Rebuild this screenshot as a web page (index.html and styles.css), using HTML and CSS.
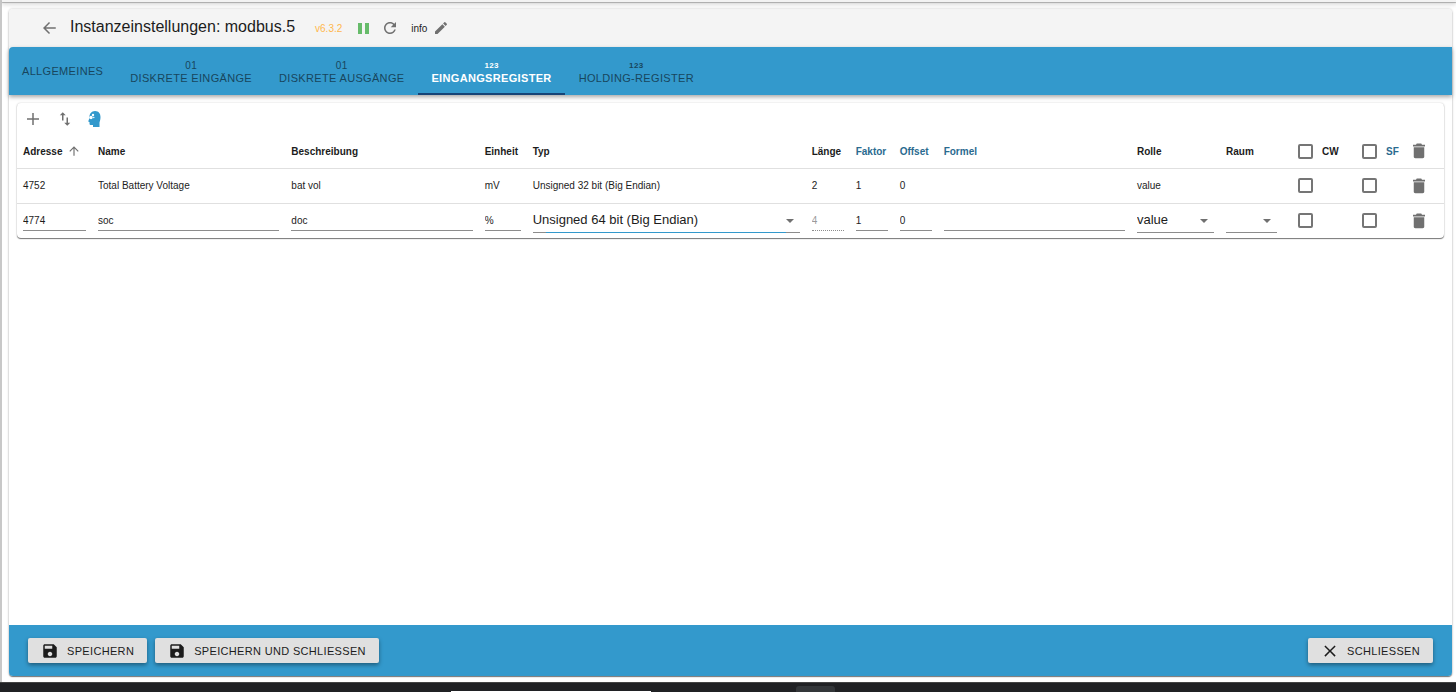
FILE: index.html
```html
<!DOCTYPE html>
<html lang="de">
<head>
<meta charset="utf-8">
<title>Instanzeinstellungen: modbus.5</title>
<link rel="stylesheet" href="styles.css">
</head>
<body>
<svg class="sprite" aria-hidden="true">
  <symbol id="trash" viewBox="0 0 24 24"><path d="M5 7h14v12.500c0 1-.8 2-2 2H7c-1.200 0-2-1-2-2zM20 3.500h-4l-1-1.500H9L8 3.500H4V6h16z"/></symbol>
  <symbol id="save" viewBox="0 0 24 24"><path d="M17 3H5c-1.110 0-2 .9-2 2v14c0 1.100.89 2 2 2h14c1.100 0 2-.9 2-2V7l-4-4zm-5 16c-1.660 0-3-1.340-3-3s1.340-3 3-3 3 1.340 3 3-1.340 3-3 3zm3-10H5V5h10v4z"/></symbol>
  <symbol id="arrow" viewBox="0 0 8 4"><path d="M0 0h8L4 4z"/></symbol>
</svg>
<div class="app">
  <div class="topbar"></div>
  <main class="card">
    <header class="head">
      <button class="icon-btn back" aria-label="Zurück"><svg viewBox="0 0 24 24"><path d="M21 11H7.830l5.590-5.590L12 4l-8 8 8 8 1.410-1.410L7.830 13H21v-2z"/></svg></button>
      <h1>Instanzeinstellungen: modbus.5</h1>
      <span class="version">v6.3.2</span>
      <button class="icon-btn pause" aria-label="Pause"><svg viewBox="0 0 16 16"><path d="M3 3h4v11H3zM10 3h4v11h-4z"/></svg></button>
      <button class="icon-btn reload" aria-label="Neu laden"><svg viewBox="0 0 24 24"><path d="M17.650 6.350C16.200 4.900 14.210 4 12 4c-4.420 0-7.990 3.580-7.990 8s3.570 8 7.990 8c3.730 0 6.840-2.550 7.730-6h-2.080c-.82 2.330-3.040 4-5.650 4-3.310 0-6-2.690-6-6s2.690-6 6-6c1.660 0 3.140.69 4.220 1.780L13 11h7V4l-2.350 2.350z"/></svg></button>
      <span class="level">info</span>
      <button class="icon-btn edit" aria-label="Bearbeiten"><svg viewBox="0 0 24 24"><path d="M3 17.250V21h3.750L17.810 9.940l-3.750-3.750L3 17.250zM20.710 7.040c.39-.39.39-1.020 0-1.410l-2.340-2.340a1 1 0 0 0-1.410 0l-1.830 1.830 3.750 3.750 1.830-1.830z"/></svg></button>
    </header>

    <nav class="tabs" role="tablist">
      <button class="tab" role="tab">ALLGEMEINES</button>
      <button class="tab" role="tab"><span class="tab-icon">01</span>DISKRETE EINGÄNGE</button>
      <button class="tab" role="tab"><span class="tab-icon">01</span>DISKRETE AUSGÄNGE</button>
      <button class="tab active" role="tab" aria-selected="true"><span class="tab-icon num">123</span>EINGANGSREGISTER</button>
      <button class="tab" role="tab"><span class="tab-icon num">123</span>HOLDING-REGISTER</button>
    </nav>

    <section class="content">
      <div class="paper">
        <div class="tools">
          <button class="icon-btn" aria-label="Hinzufügen"><svg viewBox="0 0 24 24"><path d="M20 13h-7v7h-2v-7H4v-2h7V4h2v7h7v2z"/></svg></button>
          <button class="icon-btn" aria-label="Importieren/Exportieren"><svg viewBox="0 0 24 24"><path d="M16 17.010V10h-2v7.010h-3L15 21l4-3.990h-3zM9 3L5 6.990h3V14h2V6.990h3L9 3z"/></svg></button>
          <button class="icon-btn head-icon" aria-label="Expertenmodus"><svg viewBox="0 0 18 18"><path d="M7 17v-2H5c-1 0-1.500-.5-1.500-1.500V12H2.500v-1.500L3.500 8C3 4 5.500 1 9 1c4 0 5.500 3 5.500 6 0 2-.5 4-1 5.500V17z"/><g fill="#fff"><circle cx="7" cy="5" r="1.200"/><circle cx="5" cy="7.500" r="1.700"/><circle cx="7.800" cy="7.500" r=".7"/></g></svg></button>
        </div>
        <table class="grid">
          <colgroup>
            <col class="c-addr"><col><col><col class="c-unit"><col class="c-type"><col class="c-num"><col class="c-num"><col class="c-num"><col><col class="c-role"><col class="c-room"><col class="c-cw"><col class="c-sf"><col class="c-del">
          </colgroup>
          <thead>
            <tr>
              <th><span class="sort">Adresse <svg viewBox="0 0 24 24"><path d="M4 12l1.410 1.410L11 7.830V20h2V7.830l5.580 5.590L20 12l-8-8-8 8z"/></svg></span></th>
              <th>Name</th><th>Beschreibung</th><th>Einheit</th><th>Typ</th><th>Länge</th>
              <th class="link">Faktor</th><th class="link">Offset</th><th class="link">Formel</th>
              <th>Rolle</th><th>Raum</th>
              <th><label class="check-label"><input type="checkbox">CW</label></th>
              <th class="link"><label class="check-label"><input type="checkbox">SF</label></th>
              <th><button class="icon-btn del" aria-label="Alle löschen"><svg><use href="#trash"/></svg></button></th>
            </tr>
          </thead>
          <tbody>
            <tr>
              <td>4752</td><td>Total Battery Voltage</td><td>bat vol</td><td>mV</td><td>Unsigned 32 bit (Big Endian)</td><td>2</td><td>1</td><td>0</td><td></td><td>value</td><td></td>
              <td><input type="checkbox" aria-label="CW"></td>
              <td><input type="checkbox" aria-label="SF"></td>
              <td><button class="icon-btn del" aria-label="Löschen"><svg><use href="#trash"/></svg></button></td>
            </tr>
            <tr>
              <td><input class="field" aria-label="Adresse" value="4774"></td>
              <td><input class="field" aria-label="Name" value="soc"></td>
              <td><input class="field" aria-label="Beschreibung" value="doc"></td>
              <td><input class="field" aria-label="Einheit" value="%"></td>
              <td><span class="select focus"><select class="field" aria-label="Typ"><option>Unsigned 64 bit (Big Endian)</option></select><svg><use href="#arrow"/></svg></span></td>
              <td><input class="field" aria-label="Länge" value="4" disabled></td>
              <td><input class="field" aria-label="Faktor" value="1"></td>
              <td><input class="field" aria-label="Offset" value="0"></td>
              <td><input class="field" aria-label="Formel" value=""></td>
              <td><span class="select"><select class="field" aria-label="Rolle"><option>value</option></select><svg><use href="#arrow"/></svg></span></td>
              <td><span class="select"><select class="field" aria-label="Raum"><option></option></select><svg><use href="#arrow"/></svg></span></td>
              <td><input type="checkbox" aria-label="CW"></td>
              <td><input type="checkbox" aria-label="SF"></td>
              <td><button class="icon-btn del" aria-label="Löschen"><svg><use href="#trash"/></svg></button></td>
            </tr>
          </tbody>
        </table>
      </div>
    </section>

    <footer class="foot">
      <button class="btn"><svg><use href="#save"/></svg>SPEICHERN</button>
      <button class="btn"><svg><use href="#save"/></svg>SPEICHERN UND SCHLIESSEN</button>
      <button class="btn close"><svg viewBox="0 0 24 24"><path d="M19.500 5.900L18.100 4.500 12 10.600 5.900 4.500 4.500 5.900 10.600 12 4.500 18.100 5.900 19.500 12 13.400 18.100 19.500 19.500 18.100 13.400 12z"/></svg>SCHLIESSEN</button>
    </footer>
  </main>
</div>
<div class="taskbar"><span class="window-edge"></span><span class="task"></span></div>
</body>
</html>
```
FILE: styles.css
```css
* { box-sizing: border-box; }

body {
  margin: 0;
  height: 100vh;
  display: flex;
  flex-direction: column;
  overflow: hidden;
  background: #fff;
  color: #1c1c1c;
  font-family: "Liberation Sans", Arial, sans-serif;
  font-size: 10px;
}

button, input, select { font: inherit; color: inherit; margin: 0; }
svg { fill: currentColor; flex: none; }
.sprite { position: absolute; width: 0; height: 0; }

.app {
  flex: 1;
  min-height: 0;
  display: flex;
  flex-direction: column;
  border-left: 2px solid #c8c8c8;
}
.topbar {
  height: 2px;
  margin-bottom: 7px;
  background: #f3f3f3;
  box-shadow: 0 1px 1px #aaa, 0 2px 4px #bbb;
}
.card {
  flex: 1;
  min-height: 0;
  display: flex;
  flex-direction: column;
  margin: 0 4px 6px 7px;
  border-radius: 4px;
  box-shadow: 0 1px 1px #777, 0 0 2px 1px #e4e4e4;
}

.head {
  display: flex;
  align-items: center;
  height: 38px;
  padding-left: 31px;
  background: #f4f4f4;
  border-radius: 4px 4px 0 0;
}
.head h1 { margin: 0 20px 2px 12px; font-size: 16px; font-weight: 400; }
.icon-btn {
  display: flex;
  padding: 0;
  border: 0;
  background: none;
  color: #707070;
}
.icon-btn svg { width: 18px; height: 18px; }
.version { color: #ffb74d; margin-right: 13px; }
.icon-btn.pause { color: #66bb6a; margin-right: 10px; }
.icon-btn.pause svg { width: 16px; height: 16px; }
.reload { margin-right: 12px; }
.level { margin-right: 6px; }
.icon-btn.edit svg { width: 16px; height: 16px; }

.tabs {
  display: flex;
  gap: 1px;
  height: 48px;
  background: #3399cc;
  border-radius: 4px 0 0;
  box-shadow: 0 2px 4px rgba(0, 0, 0, .35);
  position: relative;
}
.tab {
  display: flex;
  flex-direction: column;
  align-items: center;
  justify-content: center;
  padding: 3px 13px 0;
  border: 0;
  border-bottom: 2px solid transparent;
  background: none;
  color: #18465d;
  font-size: 11px;
  line-height: 13px;
  letter-spacing: .03em;
}
.tab-icon { font-size: 10px; line-height: 13px; }
.tab-icon.num { font-size: 8px; font-weight: 700; }
.tab.active { color: #fff; font-weight: 700; border-color: #164477; }

.content { flex: 1; padding: 8px 8px 0; background: #fff; }
.paper {
  border-radius: 4px;
  box-shadow: 0 1px 1px #777, 0 0 2px #ccc;
}
.tools {
  display: flex;
  align-items: center;
  gap: 14px;
  height: 32px;
  padding-left: 7px;
}
.icon-btn.head-icon { color: #3399cc; margin-left: -2px; }

.grid { width: 100%; table-layout: fixed; border-collapse: collapse; }
.c-addr { width: 75px; }
.c-unit { width: 48px; }
.c-type { width: 279px; }
.c-num { width: 44px; }
.c-role { width: 89px; }
.c-room { width: 63px; }
.c-cw { width: 64px; }
.c-sf { width: 57px; }
.c-del { width: 40px; }
.grid th, .grid td {
  height: 35px;
  padding: 0 6px;
  text-align: left;
  white-space: nowrap;
  border-bottom: 1px solid #e0e0e0;
}
.grid th { font-weight: 700; height: 33px; }
.grid th.link { color: #2a6a8f; }
.grid tr:last-child td { border-bottom: 0; }
.sort { display: flex; align-items: center; gap: 5px; }
.sort svg { width: 14px; height: 14px; color: #707070; }
.check-label { display: flex; align-items: center; gap: 9px; }

input[type="checkbox"] {
  appearance: none;
  display: block;
  flex: none;
  width: 15px;
  height: 15px;
  margin-left: 9px;
  border: 2px solid #757575;
  border-radius: 2px;
}
.field {
  display: block;
  width: 100%;
  height: 21px;
  padding: 0;
  border: 0;
  border-bottom: 1px solid #8c8c8c;
  border-radius: 0;
  background: transparent;
  outline: 0;
}
.field:disabled { color: #9a9a9a; border-bottom-style: dotted; }
.select { display: block; position: relative; }
.select svg {
  position: absolute;
  right: 6px;
  top: 11px;
  width: 8px;
  height: 4px;
  color: #707070;
  pointer-events: none;
}
select.field {
  appearance: none;
  height: 25px;
  padding-bottom: 2px;
  font-size: 13px;
}
.select.focus::after {
  content: "";
  position: absolute;
  left: 5%;
  right: 5%;
  bottom: 0;
  height: 1px;
  background: #3399cc;
}

.foot {
  display: flex;
  align-items: center;
  gap: 8px;
  height: 51px;
  padding: 0 19px;
  background: #3399cc;
  border-radius: 0 0 4px 4px;
}
.btn {
  display: flex;
  align-items: center;
  gap: 8px;
  height: 25px;
  padding: 0 13px;
  border: 0;
  border-radius: 2px;
  background: #e0e0e0;
  font-size: 11px;
  letter-spacing: .03em;
  box-shadow: 0 2px 4px rgba(0, 0, 0, .4);
}
.btn svg { width: 18px; height: 18px; }
.btn.close { margin-left: auto; }

.taskbar {
  position: relative;
  height: 10px;
  background: #202124;
  border-top: 1px solid #444;
}
.window-edge, .task { position: absolute; bottom: 0; }
.window-edge { left: 31%; width: 200px; height: 1px; background: #fff; }
.task { left: 55%; width: 39px; height: 6px; margin-left: -5px; background: #333639; border-radius: 3px 3px 0 0; }
```
